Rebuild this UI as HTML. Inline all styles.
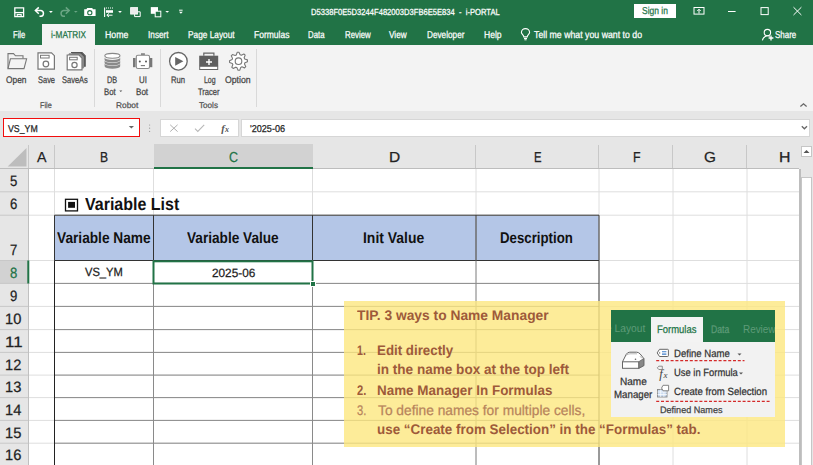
<!DOCTYPE html>
<html><head><meta charset="utf-8">
<style>
*{box-sizing:border-box;margin:0;padding:0}
html,body{width:813px;height:465px;overflow:hidden;background:#fff;font-family:"Liberation Sans",sans-serif}
.a{position:absolute}
.t{white-space:pre;transform-origin:0 0}
</style></head><body>
<div class="a" style="left:0;top:0;width:813px;height:45px;background:#217346"></div>
<div class="a" style="left:634px;top:4px;width:42px;height:14px;background:#fff"></div>
<div class="a" style="left:42px;top:24px;width:53px;height:22px;background:#f3f3f3"></div>
<div class="a" style="left:0;top:45px;width:813px;height:66.5px;background:#f3f3f3;border-bottom:1px solid #dadada"></div>
<div class="a" style="left:94px;top:49px;width:1px;height:58px;background:#d9d9d9"></div>
<div class="a" style="left:160px;top:49px;width:1px;height:58px;background:#d9d9d9"></div>
<div class="a" style="left:256px;top:49px;width:1px;height:58px;background:#d9d9d9"></div>
<div class="a" style="left:0;top:111px;width:813px;height:58px;background:#e6e6e6"></div>
<div class="a" style="left:3px;top:118px;width:137px;height:19px;background:#fff;border:1px solid #f20d0d"></div>
<div class="a" style="left:160px;top:119px;width:79px;height:18px;background:#fff;border:1px solid #d6d6d6"></div>
<div class="a" style="left:241px;top:119px;width:569px;height:18px;background:#fff;border:1px solid #d6d6d6"></div>
<svg class="a" style="left:0;top:0" width="813" height="145"><polygon points="128.8,125.9 134,125.9 131.4,128.6" fill="#666"/><circle cx="149.6" cy="125" r="0.6" fill="#999"/><circle cx="149.6" cy="128.2" r="0.6" fill="#999"/><circle cx="149.6" cy="131.4" r="0.6" fill="#999"/><path d="M170.2,124.8 L177.6,131.6 M177.6,124.8 L170.2,131.6" stroke="#b0b0b0" stroke-width="1"/><path d="M195,128.6 L197.8,131.4 L204.2,124.8" fill="none" stroke="#b8b8b8" stroke-width="1.1"/><text x="221.3" y="131.5" font-family="Liberation Serif" font-style="italic" font-weight="bold" font-size="10.5" fill="#555">f</text><text x="225" y="131.8" font-family="Liberation Serif" font-style="italic" font-weight="bold" font-size="8" fill="#555">x</text><path d="M800.4,106.5 L803.5,103.8 L806.6,106.5" fill="none" stroke="#666" stroke-width="1.3"/><path d="M801.8,126.3 L804.4,128.8 L807,126.3" fill="none" stroke="#666" stroke-width="1.3"/></svg>
<div class="a" style="left:153.5px;top:144px;width:159px;height:25px;background:#d2d2d2"></div>
<div class="a" style="left:0;top:168px;width:799px;height:1px;background:#bdbdbd"></div>
<div class="a" style="left:153.5px;top:167px;width:159px;height:2px;background:#217346"></div>
<div class="a" style="left:28px;top:145px;width:1px;height:23px;background:#c8c8c8"></div>
<div class="a" style="left:54px;top:145px;width:1px;height:23px;background:#c8c8c8"></div>
<div class="a" style="left:475px;top:145px;width:1px;height:23px;background:#c8c8c8"></div>
<div class="a" style="left:598px;top:145px;width:1px;height:23px;background:#c8c8c8"></div>
<div class="a" style="left:672px;top:145px;width:1px;height:23px;background:#c8c8c8"></div>
<div class="a" style="left:746px;top:145px;width:1px;height:23px;background:#c8c8c8"></div>
<svg class="a" style="left:0;top:0" width="60" height="170"><polygon points="7.7,166.5 26.5,148 26.5,166.5" fill="#bdbdbd"/></svg>
<svg class="a" style="left:0;top:0" width="813" height="465"><rect x="0" y="169" width="28.5" height="300" fill="#e6e6e6"/><rect x="0" y="260.5" width="28.5" height="23" fill="#d2d2d2"/><rect x="54.5" y="215.2" width="544.5" height="45.3" fill="#b4c6e7"/><line x1="29" y1="191.8" x2="799" y2="191.8" stroke="#dedede"/><line x1="29" y1="215.2" x2="799" y2="215.2" stroke="#dedede"/><line x1="29" y1="260.5" x2="799" y2="260.5" stroke="#dedede"/><line x1="29" y1="283.4" x2="799" y2="283.4" stroke="#dedede"/><line x1="29" y1="306.4" x2="799" y2="306.4" stroke="#dedede"/><line x1="29" y1="329.6" x2="799" y2="329.6" stroke="#dedede"/><line x1="29" y1="352.4" x2="799" y2="352.4" stroke="#dedede"/><line x1="29" y1="375.1" x2="799" y2="375.1" stroke="#dedede"/><line x1="29" y1="397.6" x2="799" y2="397.6" stroke="#dedede"/><line x1="29" y1="420.4" x2="799" y2="420.4" stroke="#dedede"/><line x1="29" y1="443.2" x2="799" y2="443.2" stroke="#dedede"/><line x1="29" y1="466.2" x2="799" y2="466.2" stroke="#dedede"/><line x1="54.5" y1="169" x2="54.5" y2="466" stroke="#dedede"/><line x1="153.5" y1="169" x2="153.5" y2="466" stroke="#dedede"/><line x1="312.5" y1="169" x2="312.5" y2="466" stroke="#dedede"/><line x1="476" y1="169" x2="476" y2="466" stroke="#dedede"/><line x1="599" y1="169" x2="599" y2="466" stroke="#dedede"/><line x1="673" y1="169" x2="673" y2="466" stroke="#dedede"/><line x1="747" y1="169" x2="747" y2="466" stroke="#dedede"/><line x1="0" y1="191.8" x2="28.5" y2="191.8" stroke="#c8c8c8"/><line x1="0" y1="215.2" x2="28.5" y2="215.2" stroke="#c8c8c8"/><line x1="0" y1="260.5" x2="28.5" y2="260.5" stroke="#c8c8c8"/><line x1="0" y1="283.4" x2="28.5" y2="283.4" stroke="#c8c8c8"/><line x1="0" y1="306.4" x2="28.5" y2="306.4" stroke="#c8c8c8"/><line x1="0" y1="329.6" x2="28.5" y2="329.6" stroke="#c8c8c8"/><line x1="0" y1="352.4" x2="28.5" y2="352.4" stroke="#c8c8c8"/><line x1="0" y1="375.1" x2="28.5" y2="375.1" stroke="#c8c8c8"/><line x1="0" y1="397.6" x2="28.5" y2="397.6" stroke="#c8c8c8"/><line x1="0" y1="420.4" x2="28.5" y2="420.4" stroke="#c8c8c8"/><line x1="0" y1="443.2" x2="28.5" y2="443.2" stroke="#c8c8c8"/><line x1="0" y1="466.2" x2="28.5" y2="466.2" stroke="#c8c8c8"/><line x1="28.5" y1="169" x2="28.5" y2="466" stroke="#c0c0c0"/><line x1="28.3" y1="260.5" x2="28.3" y2="283.5" stroke="#217346" stroke-width="2"/><line x1="54.5" y1="215.2" x2="599" y2="215.2" stroke="#333"/><line x1="54.5" y1="260.5" x2="599" y2="260.5" stroke="#333"/><line x1="54.5" y1="215.2" x2="54.5" y2="260.5" stroke="#333"/><line x1="153.5" y1="215.2" x2="153.5" y2="260.5" stroke="#333"/><line x1="312.5" y1="215.2" x2="312.5" y2="260.5" stroke="#333"/><line x1="476" y1="215.2" x2="476" y2="260.5" stroke="#333"/><line x1="599" y1="215.2" x2="599" y2="260.5" stroke="#333"/><line x1="54.5" y1="283.4" x2="599" y2="283.4" stroke="#8a8a8a"/><line x1="54.5" y1="306.4" x2="599" y2="306.4" stroke="#8a8a8a"/><line x1="54.5" y1="329.6" x2="599" y2="329.6" stroke="#8a8a8a"/><line x1="54.5" y1="352.4" x2="599" y2="352.4" stroke="#8a8a8a"/><line x1="54.5" y1="375.1" x2="599" y2="375.1" stroke="#8a8a8a"/><line x1="54.5" y1="397.6" x2="599" y2="397.6" stroke="#8a8a8a"/><line x1="54.5" y1="420.4" x2="599" y2="420.4" stroke="#8a8a8a"/><line x1="54.5" y1="443.2" x2="599" y2="443.2" stroke="#8a8a8a"/><line x1="54.5" y1="466.2" x2="599" y2="466.2" stroke="#8a8a8a"/><line x1="54.5" y1="260.5" x2="54.5" y2="466" stroke="#222"/><line x1="153.5" y1="260.5" x2="153.5" y2="466" stroke="#8a8a8a"/><line x1="312.5" y1="260.5" x2="312.5" y2="466" stroke="#8a8a8a"/><line x1="476" y1="260.5" x2="476" y2="466" stroke="#8a8a8a"/><line x1="599" y1="260.5" x2="599" y2="466" stroke="#444"/><rect x="153.5" y="261.3" width="159" height="22.2" fill="none" stroke="#217346" stroke-width="2"/><rect x="310.5" y="281.5" width="5" height="5" fill="#217346" stroke="#fff" stroke-width="1"/><rect x="799" y="144" width="14" height="321" fill="#e6e6e6"/><line x1="800" y1="169" x2="800" y2="466" stroke="#bdbdbd" stroke-width="2"/><rect x="801.5" y="146.5" width="10" height="10" fill="#fff" stroke="#c6c6c6"/><polygon points="803.5,153 806.5,150 809.5,153" fill="#555"/><rect x="801.5" y="177.5" width="10" height="290" fill="#fff" stroke="#c6c6c6"/></svg>
<svg class="a" style="left:0;top:0" width="100" height="220"><rect x="65.5" y="199.3" width="12" height="11.6" fill="none" stroke="#111" stroke-width="1.3"/><rect x="68.1" y="201.9" width="6.9" height="5.9" fill="#111"/></svg>
<div class="a" style="left:344px;top:301px;width:441px;height:146px;background:rgba(253,231,128,0.8)"></div>
<div class="a" style="left:611px;top:310px;width:164px;height:32px;background:#217346"></div>
<div class="a" style="left:651px;top:317px;width:52px;height:25px;background:#f3f3f3"></div>
<div class="a" style="left:611px;top:342px;width:164px;height:75px;background:#f2f2f2"></div>
<div class="a" style="left:611px;top:318px;width:40px;height:20px;overflow:hidden"><div class="a t" style="left:-5.5px;top:5.5px;font-size:11px;line-height:11px;color:#5e9b78;transform:scaleX(0.93);text-rendering:geometricPrecision">e Layout</div></div>
<div class="a" style="left:703px;top:318px;width:72px;height:20px;overflow:hidden"><div class="a t" style="left:40.4px;top:5.7px;font-size:11px;line-height:11px;color:#5e9b78;transform:scaleX(0.9)">Review</div></div>
<svg class="a" style="left:0;top:0" width="813" height="465"><line x1="656.2" y1="360.6" x2="744.5" y2="360.6" stroke="#d42a2a" stroke-width="1.4" stroke-dasharray="3,1.8"/><line x1="656.2" y1="401.4" x2="769.7" y2="401.4" stroke="#d42a2a" stroke-width="1.4" stroke-dasharray="3,1.8"/><polygon points="737.5,353.5 741.5,353.5 739.5,355.5" fill="#555"/><polygon points="739,372.5 743,372.5 741,374.5" fill="#555"/><path d="M659.5,349.3 H667.6 A0.8,0.8 0 0 1 668.4,350.1 V355.7 A0.8,0.8 0 0 1 667.6,356.5 H659.5 L657.2,352.9 Z" fill="#fff" stroke="#666" stroke-width="1"/><path d="M662,351.7 H666.4 M662,354.1 H666.4" stroke="#3d7cc9" stroke-width="1.1"/><circle cx="659.6" cy="352.9" r="0.7" fill="#666"/><path d="M658.8,366.2 H662.3 V369.5 H658.8 L657.3,367.85 Z" fill="none" stroke="#777" stroke-width="0.8"/><text x="659.2" y="377.6" font-family="Liberation Serif" font-style="italic" font-size="12.5" fill="#444">f</text><text x="663.6" y="378.2" font-family="Liberation Serif" font-style="italic" font-size="9" fill="#444">x</text><rect x="657.5" y="389.5" width="9.5" height="7.5" fill="#c9daf0" stroke="#888" stroke-width="0.9"/><path d="M657.5,392 H667 M657.5,394.5 H667 M660.7,389.5 V397 M663.9,389.5 V397" stroke="#fff" stroke-width="0.7"/><path d="M663,385.3 H668.6 V390.8 H663 L661.6,388 Z" fill="#fff" stroke="#777" stroke-width="0.9"/><path d="M622.5,361.8 L626.2,354.4 Q627.4,352.2 629.8,352.2 H636.6 Q638.6,352.2 640.2,354 L643.8,358.5 V365.6 L638.6,368.3" fill="#fff" stroke="#666" stroke-width="1"/><path d="M638.7,361.8 L643.8,358.5 V365.6 L638.7,368.3 Z" fill="#888" stroke="#666" stroke-width="0.8"/><path d="M626.5,355.2 Q628,353.8 630,353.8 H637 M640,356.2 L642,358.4" fill="none" stroke="#999" stroke-width="0.7"/><circle cx="635.5" cy="359.2" r="0.8" fill="#666"/><rect x="622.5" y="361.8" width="16.2" height="6.5" fill="#fff" stroke="#666" stroke-width="1"/></svg>
<svg class="a" style="left:0;top:0" width="813" height="120"><path d="M14.8,7.8 H23.6 V16.6 H14.8 Z" fill="none" stroke="#fff" stroke-width="1.3"/><path d="M14.8,12.6 H23.6" stroke="#fff" stroke-width="1.3"/><path d="M17.2,16.6 V14.6 H21.2 V16.6" fill="none" stroke="#fff" stroke-width="1.1"/><path d="M35.8,10.6 H41 A3,2.9 0 0 1 41,16.3 H39.5" fill="none" stroke="#fff" stroke-width="1.5"/><path d="M38.8,7.4 L35.4,10.6 L38.8,13.8" fill="none" stroke="#fff" stroke-width="1.5"/><polygon points="49,11 52.8,11 50.9,12.9" fill="#fff"/><path d="M69,10.6 H63.5 A3,2.9 0 0 0 63.5,16.3 H65" fill="none" stroke="#6aa584" stroke-width="1.5"/><path d="M65.8,7.4 L69.2,10.6 L65.8,13.8" fill="none" stroke="#6aa584" stroke-width="1.5"/><polygon points="74,11 77.6,11 75.8,12.8" fill="#6aa584"/><path d="M84.2,9.2 H86.4 L87.2,8 H92.2 L93,9.2 H95.6 V16 H84.2 Z" fill="#fff"/><circle cx="89.8" cy="12.7" r="2.1" fill="none" stroke="#217346" stroke-width="1.1"/><path d="M104.6,7.4 V17" stroke="#fff" stroke-width="1.1"/><path d="M106,8 H113" stroke="#fff" stroke-width="1" stroke-dasharray="1,1"/><rect x="106" y="10.2" width="7" height="2.6" fill="#fff"/><path d="M112.5,15.2 H107 M109,13.4 L106.8,15.2 L109,17" fill="none" stroke="#fff" stroke-width="1"/><polygon points="118.1,11 121.9,11 120,12.9" fill="#fff"/><rect x="130.6" y="7.6" width="7" height="6.5" fill="#ececec" stroke="#fff" stroke-width="0.8"/><path d="M137.6,11.8 H140.2 V16.6 H134.6 V14.2" fill="none" stroke="#fff" stroke-width="1"/><rect x="150.8" y="7.1" width="7.2" height="6.7" fill="#fff"/><rect x="155.2" y="11.2" width="5.6" height="5.6" fill="#217346" stroke="#fff" stroke-width="1"/><polygon points="165.3,10.9 169.1,10.9 167.2,12.8" fill="#fff"/><path d="M179.1,10.2 H182.6" stroke="#fff" stroke-width="1"/><polygon points="179,11.7 182.8,11.7 180.9,13.8" fill="#fff"/><rect x="694" y="7.5" width="10" height="6.6" fill="none" stroke="#fff" stroke-width="1"/><path d="M699,13.5 V9.5 M697.3,11 L699,9.2 L700.7,11" fill="none" stroke="#fff" stroke-width="1"/><path d="M728,11.5 H735.6" stroke="#fff" stroke-width="1"/><rect x="761" y="7.6" width="7.2" height="7" fill="none" stroke="#fff" stroke-width="1"/><path d="M793.5,7.2 L801.4,15 M801.4,7.2 L793.5,15" stroke="#fff" stroke-width="1"/><g transform="translate(0,0.9)"><path d="M523.8,36 C523.8,34 521.4,33 521.4,31.6 A4.1,3.9 0 0 1 529.6,31.6 C529.6,33 527.2,34 527.2,36 Z" fill="none" stroke="#fff" stroke-width="1.1"/><path d="M524,37.6 H527 M524.4,38.9 H526.6" stroke="#fff" stroke-width="1"/></g><circle cx="767.4" cy="32.6" r="3.2" fill="none" stroke="#fff" stroke-width="1.1"/><path d="M762.4,40.4 A5.6,5.6 0 0 1 770,36.2" fill="none" stroke="#fff" stroke-width="1.1"/><path d="M771,35.6 V40.4 M768.6,38 H773.4" stroke="#fff" stroke-width="1.3"/><path d="M8,68.6 V53.6 H13.5 L15.5,55.8 H23 V58.6" fill="none" stroke="#777" stroke-width="1.1"/><path d="M8,68.6 L10.4,58.8 H26.6 L24,68.6 Z" fill="none" stroke="#777" stroke-width="1.1"/><path d="M38,52.8 H51.5 L54.4,55.7 V69.2 H38 Z" fill="#fff" stroke="#777" stroke-width="1.2"/><rect x="40.5" y="55.3" width="8.6" height="2.7" fill="none" stroke="#777" stroke-width="1"/><circle cx="45.9" cy="64" r="2.8" fill="none" stroke="#777" stroke-width="1.2"/><path d="M71,52.5 H82 L85.2,55.7 V66.3 H83" fill="#555" stroke="#555" stroke-width="1.1"/><path d="M69,53.8 H80.5 L83.6,57 V68 H69 Z" fill="#999" stroke="#888" stroke-width="1"/><path d="M67.2,55 H79 L82,58 V69.8 H67.2 Z" fill="#fff" stroke="#777" stroke-width="1.2"/><rect x="69.6" y="57.3" width="7.6" height="2.5" fill="none" stroke="#777" stroke-width="1"/><circle cx="74.5" cy="65" r="2.6" fill="none" stroke="#777" stroke-width="1.2"/><path d="M104.6,63.6 V66.2 A7.8,2.5 0 0 0 120.2,66.2 V63.6 A7.8,2.5 0 0 1 104.6,63.6 Z" fill="#8a8a8a"/><path d="M104.6,60.6 V62.9 A7.8,2.5 0 0 0 120.2,62.9 V60.6 A7.8,2.5 0 0 1 104.6,60.6 Z" fill="#8a8a8a"/><path d="M104.6,57.6 V59.9 A7.8,2.5 0 0 0 120.2,59.9 V57.6 A7.8,2.5 0 0 1 104.6,57.6 Z" fill="#8a8a8a"/><ellipse cx="112.4" cy="55.8" rx="7.6" ry="2.4" fill="#fff" stroke="#888" stroke-width="1.1"/><rect x="141" y="53.2" width="3.9" height="2" fill="#888"/><rect x="133" y="58" width="2.6" height="9.2" fill="#777"/><rect x="149.8" y="58" width="2.5" height="9.2" fill="#777"/><rect x="136.3" y="55.2" width="13.2" height="13.3" rx="1.6" fill="#fff" stroke="#888" stroke-width="1.1"/><circle cx="139.8" cy="61.5" r="1" fill="#555"/><circle cx="146" cy="61.5" r="1" fill="#555"/><path d="M140.8,65.6 H145" stroke="#777" stroke-width="1.1"/><circle cx="178.4" cy="61.3" r="8.8" fill="#fff" stroke="#666" stroke-width="1.3"/><polygon points="175.2,56.9 175.2,65.7 183.4,61.3" fill="#666"/><path d="M203.8,55.8 V53.2 H213.9 V55.8" fill="none" stroke="#666" stroke-width="1.2"/><rect x="199.2" y="55.7" width="19" height="10.6" fill="#5f5f5f"/><rect x="199.7" y="66.3" width="18" height="3.2" fill="#fff" stroke="#666" stroke-width="1"/><path d="M209,59 V65 M206,62 H212" stroke="#fff" stroke-width="1.4"/><polygon points="119.3,90.6 122.3,90.6 120.8,92.1" fill="#555"/></svg>
<svg class="a" style="left:0;top:0" width="813" height="120"><polygon points="237.18,52.30 238.94,52.21 240.10,54.80 241.32,55.23 243.86,53.97 245.17,55.16 244.16,57.81 244.71,58.98 247.40,59.88 247.49,61.64 244.90,62.80 244.47,64.02 245.73,66.56 244.54,67.87 241.89,66.86 240.72,67.41 239.82,70.10 238.06,70.19 236.90,67.60 235.68,67.17 233.14,68.43 231.83,67.24 232.84,64.59 232.29,63.42 229.60,62.52 229.51,60.76 232.10,59.60 232.53,58.38 231.27,55.84 232.46,54.53 235.11,55.54 236.28,54.99" fill="#fff" stroke="#777" stroke-width="1.1" stroke-linejoin="round"/><circle cx="238.5" cy="61.2" r="3.3" fill="none" stroke="#777" stroke-width="1.1"/></svg>
<div class="a t" style="left:310.60px;top:8.35px;color:#fff;-webkit-text-stroke:0.25px #fff;text-rendering:geometricPrecision;font-size:8.8px;line-height:8.8px;transform:scaleX(0.8646);font-weight:normal;font-family:'Liberation Sans';">D5338F0E5D3244F482003D3FB6E5E834  -  i-PORTAL</div>
<div class="a t" style="left:641.60px;top:6.93px;color:#217346;-webkit-text-stroke:0.25px #217346;text-rendering:geometricPrecision;font-size:10px;line-height:10px;transform:scaleX(0.8464);font-weight:normal;font-family:'Liberation Sans';">Sign in</div>
<div class="a t" style="left:12.60px;top:30.94px;color:#fff;-webkit-text-stroke:0.25px #fff;text-rendering:geometricPrecision;font-size:10px;line-height:10px;transform:scaleX(0.7614);font-weight:normal;font-family:'Liberation Sans';">File</div>
<div class="a t" style="left:105.00px;top:30.94px;color:#fff;-webkit-text-stroke:0.25px #fff;text-rendering:geometricPrecision;font-size:10px;line-height:10px;transform:scaleX(0.8781);font-weight:normal;font-family:'Liberation Sans';">Home</div>
<div class="a t" style="left:148.00px;top:30.94px;color:#fff;-webkit-text-stroke:0.25px #fff;text-rendering:geometricPrecision;font-size:10px;line-height:10px;transform:scaleX(0.8244);font-weight:normal;font-family:'Liberation Sans';">Insert</div>
<div class="a t" style="left:188.00px;top:30.94px;color:#fff;-webkit-text-stroke:0.25px #fff;text-rendering:geometricPrecision;font-size:10px;line-height:10px;transform:scaleX(0.8302);font-weight:normal;font-family:'Liberation Sans';">Page Layout</div>
<div class="a t" style="left:253.80px;top:30.94px;color:#fff;-webkit-text-stroke:0.25px #fff;text-rendering:geometricPrecision;font-size:10px;line-height:10px;transform:scaleX(0.8495);font-weight:normal;font-family:'Liberation Sans';">Formulas</div>
<div class="a t" style="left:307.60px;top:30.94px;color:#fff;-webkit-text-stroke:0.25px #fff;text-rendering:geometricPrecision;font-size:10px;line-height:10px;transform:scaleX(0.7792);font-weight:normal;font-family:'Liberation Sans';">Data</div>
<div class="a t" style="left:344.60px;top:30.94px;color:#fff;-webkit-text-stroke:0.25px #fff;text-rendering:geometricPrecision;font-size:10px;line-height:10px;transform:scaleX(0.7865);font-weight:normal;font-family:'Liberation Sans';">Review</div>
<div class="a t" style="left:389.40px;top:30.94px;color:#fff;-webkit-text-stroke:0.25px #fff;text-rendering:geometricPrecision;font-size:10px;line-height:10px;transform:scaleX(0.8181);font-weight:normal;font-family:'Liberation Sans';">View</div>
<div class="a t" style="left:427.00px;top:30.94px;color:#fff;-webkit-text-stroke:0.25px #fff;text-rendering:geometricPrecision;font-size:10px;line-height:10px;transform:scaleX(0.8218);font-weight:normal;font-family:'Liberation Sans';">Developer</div>
<div class="a t" style="left:483.60px;top:30.94px;color:#fff;-webkit-text-stroke:0.25px #fff;text-rendering:geometricPrecision;font-size:10px;line-height:10px;transform:scaleX(0.8569);font-weight:normal;font-family:'Liberation Sans';">Help</div>
<div class="a t" style="left:533.60px;top:30.94px;color:#fff;-webkit-text-stroke:0.25px #fff;text-rendering:geometricPrecision;font-size:10px;line-height:10px;transform:scaleX(0.8754);font-weight:normal;font-family:'Liberation Sans';">Tell me what you want to do</div>
<div class="a t" style="left:775.00px;top:30.94px;color:#fff;-webkit-text-stroke:0.25px #fff;text-rendering:geometricPrecision;font-size:10px;line-height:10px;transform:scaleX(0.7965);font-weight:normal;font-family:'Liberation Sans';">Share</div>
<div class="a t" style="left:51.40px;top:30.94px;color:#217346;-webkit-text-stroke:0.25px #217346;text-rendering:geometricPrecision;font-size:10px;line-height:10px;transform:scaleX(0.8202);font-weight:normal;font-family:'Liberation Sans';">i-MATRIX</div>
<div class="a t" style="left:5.80px;top:76.36px;color:#444;-webkit-text-stroke:0.25px #444;text-rendering:geometricPrecision;font-size:9.5px;line-height:9.5px;transform:scaleX(0.8800);font-weight:normal;font-family:'Liberation Sans';">Open</div>
<div class="a t" style="left:37.80px;top:76.36px;color:#444;-webkit-text-stroke:0.25px #444;text-rendering:geometricPrecision;font-size:9.5px;line-height:9.5px;transform:scaleX(0.7862);font-weight:normal;font-family:'Liberation Sans';">Save</div>
<div class="a t" style="left:62.40px;top:76.36px;color:#444;-webkit-text-stroke:0.25px #444;text-rendering:geometricPrecision;font-size:9.5px;line-height:9.5px;transform:scaleX(0.7881);font-weight:normal;font-family:'Liberation Sans';">SaveAs</div>
<div class="a t" style="left:106.60px;top:76.36px;color:#444;-webkit-text-stroke:0.25px #444;text-rendering:geometricPrecision;font-size:9.5px;line-height:9.5px;transform:scaleX(0.7646);font-weight:normal;font-family:'Liberation Sans';">DB</div>
<div class="a t" style="left:104.00px;top:87.56px;color:#444;-webkit-text-stroke:0.25px #444;text-rendering:geometricPrecision;font-size:9.5px;line-height:9.5px;transform:scaleX(0.8208);font-weight:normal;font-family:'Liberation Sans';">Bot</div>
<div class="a t" style="left:138.60px;top:76.36px;color:#444;-webkit-text-stroke:0.25px #444;text-rendering:geometricPrecision;font-size:9.5px;line-height:9.5px;transform:scaleX(0.8364);font-weight:normal;font-family:'Liberation Sans';">UI</div>
<div class="a t" style="left:136.00px;top:87.56px;color:#444;-webkit-text-stroke:0.25px #444;text-rendering:geometricPrecision;font-size:9.5px;line-height:9.5px;transform:scaleX(0.8484);font-weight:normal;font-family:'Liberation Sans';">Bot</div>
<div class="a t" style="left:171.40px;top:76.36px;color:#444;-webkit-text-stroke:0.25px #444;text-rendering:geometricPrecision;font-size:9.5px;line-height:9.5px;transform:scaleX(0.8063);font-weight:normal;font-family:'Liberation Sans';">Run</div>
<div class="a t" style="left:203.60px;top:76.36px;color:#444;-webkit-text-stroke:0.25px #444;text-rendering:geometricPrecision;font-size:9.5px;line-height:9.5px;transform:scaleX(0.7328);font-weight:normal;font-family:'Liberation Sans';">Log</div>
<div class="a t" style="left:198.00px;top:87.56px;color:#444;-webkit-text-stroke:0.25px #444;text-rendering:geometricPrecision;font-size:9.5px;line-height:9.5px;transform:scaleX(0.7957);font-weight:normal;font-family:'Liberation Sans';">Tracer</div>
<div class="a t" style="left:225.00px;top:76.36px;color:#444;-webkit-text-stroke:0.25px #444;text-rendering:geometricPrecision;font-size:9.5px;line-height:9.5px;transform:scaleX(0.9169);font-weight:normal;font-family:'Liberation Sans';">Option</div>
<div class="a t" style="left:40.00px;top:100.97px;color:#555;-webkit-text-stroke:0.25px #555;text-rendering:geometricPrecision;font-size:8.3px;line-height:8.3px;transform:scaleX(0.8724);font-weight:normal;font-family:'Liberation Sans';">File</div>
<div class="a t" style="left:116.20px;top:100.97px;color:#555;-webkit-text-stroke:0.25px #555;text-rendering:geometricPrecision;font-size:8.3px;line-height:8.3px;transform:scaleX(1.0077);font-weight:normal;font-family:'Liberation Sans';">Robot</div>
<div class="a t" style="left:199.20px;top:100.97px;color:#555;-webkit-text-stroke:0.25px #555;text-rendering:geometricPrecision;font-size:8.3px;line-height:8.3px;transform:scaleX(0.9782);font-weight:normal;font-family:'Liberation Sans';">Tools</div>
<div class="a t" style="left:7.60px;top:124.53px;color:#222;-webkit-text-stroke:0.25px #222;text-rendering:geometricPrecision;font-size:10px;line-height:10px;transform:scaleX(0.8758);font-weight:normal;font-family:'Liberation Sans';">VS_YM</div>
<div class="a t" style="left:249.60px;top:124.73px;color:#222;-webkit-text-stroke:0.25px #222;text-rendering:geometricPrecision;font-size:10px;line-height:10px;transform:scaleX(0.9066);font-weight:normal;font-family:'Liberation Sans';">'2025-06</div>
<div class="a t" style="left:36.60px;top:150.93px;color:#222;-webkit-text-stroke:0.25px #222;text-rendering:geometricPrecision;font-size:14.5px;line-height:14.5px;transform:scaleX(0.9801);font-weight:normal;font-family:'Liberation Sans';">A</div>
<div class="a t" style="left:99.69px;top:150.93px;color:#222;-webkit-text-stroke:0.25px #222;text-rendering:geometricPrecision;font-size:14.5px;line-height:14.5px;transform:scaleX(0.8327);font-weight:normal;font-family:'Liberation Sans';">B</div>
<div class="a t" style="left:228.60px;top:150.93px;color:#217346;-webkit-text-stroke:0.25px #217346;text-rendering:geometricPrecision;font-size:14.5px;line-height:14.5px;transform:scaleX(0.8604);font-weight:normal;font-family:'Liberation Sans';">C</div>
<div class="a t" style="left:388.77px;top:150.93px;color:#222;-webkit-text-stroke:0.25px #222;text-rendering:geometricPrecision;font-size:14.5px;line-height:14.5px;transform:scaleX(1.0678);font-weight:normal;font-family:'Liberation Sans';">D</div>
<div class="a t" style="left:533.88px;top:150.93px;color:#222;-webkit-text-stroke:0.25px #222;text-rendering:geometricPrecision;font-size:14.5px;line-height:14.5px;transform:scaleX(0.7824);font-weight:normal;font-family:'Liberation Sans';">E</div>
<div class="a t" style="left:632.94px;top:150.93px;color:#222;-webkit-text-stroke:0.25px #222;text-rendering:geometricPrecision;font-size:14.5px;line-height:14.5px;transform:scaleX(0.8502);font-weight:normal;font-family:'Liberation Sans';">F</div>
<div class="a t" style="left:704.00px;top:150.93px;color:#222;-webkit-text-stroke:0.25px #222;text-rendering:geometricPrecision;font-size:14.5px;line-height:14.5px;transform:scaleX(1.0553);font-weight:normal;font-family:'Liberation Sans';">G</div>
<div class="a t" style="left:778.56px;top:150.93px;color:#222;-webkit-text-stroke:0.25px #222;text-rendering:geometricPrecision;font-size:14.5px;line-height:14.5px;transform:scaleX(1.0909);font-weight:normal;font-family:'Liberation Sans';">H</div>
<div class="a t" style="left:10.20px;top:174.30px;color:#222;-webkit-text-stroke:0.25px #222;text-rendering:geometricPrecision;font-size:15px;line-height:15px;transform:scaleX(0.8750);font-weight:normal;font-family:'Liberation Sans';">5</div>
<div class="a t" style="left:10.20px;top:197.10px;color:#222;-webkit-text-stroke:0.25px #222;text-rendering:geometricPrecision;font-size:15px;line-height:15px;transform:scaleX(0.8750);font-weight:normal;font-family:'Liberation Sans';">6</div>
<div class="a t" style="left:10.20px;top:242.70px;color:#222;-webkit-text-stroke:0.25px #222;text-rendering:geometricPrecision;font-size:15px;line-height:15px;transform:scaleX(0.8750);font-weight:normal;font-family:'Liberation Sans';">7</div>
<div class="a t" style="left:10.20px;top:265.60px;color:#217346;-webkit-text-stroke:0.25px #217346;text-rendering:geometricPrecision;font-size:15px;line-height:15px;transform:scaleX(0.8750);font-weight:normal;font-family:'Liberation Sans';">8</div>
<div class="a t" style="left:10.20px;top:288.60px;color:#222;-webkit-text-stroke:0.25px #222;text-rendering:geometricPrecision;font-size:15px;line-height:15px;transform:scaleX(0.8750);font-weight:normal;font-family:'Liberation Sans';">9</div>
<div class="a t" style="left:4.99px;top:311.80px;color:#222;-webkit-text-stroke:0.25px #222;text-rendering:geometricPrecision;font-size:15px;line-height:15px;transform:scaleX(0.9787);font-weight:normal;font-family:'Liberation Sans';">10</div>
<div class="a t" style="left:4.91px;top:335.20px;color:#222;-webkit-text-stroke:0.25px #222;text-rendering:geometricPrecision;font-size:15px;line-height:15px;transform:scaleX(1.1256);font-weight:normal;font-family:'Liberation Sans';">11</div>
<div class="a t" style="left:4.99px;top:357.50px;color:#222;-webkit-text-stroke:0.25px #222;text-rendering:geometricPrecision;font-size:15px;line-height:15px;transform:scaleX(0.9787);font-weight:normal;font-family:'Liberation Sans';">12</div>
<div class="a t" style="left:4.99px;top:379.60px;color:#222;-webkit-text-stroke:0.25px #222;text-rendering:geometricPrecision;font-size:15px;line-height:15px;transform:scaleX(0.9787);font-weight:normal;font-family:'Liberation Sans';">13</div>
<div class="a t" style="left:4.99px;top:403.10px;color:#222;-webkit-text-stroke:0.25px #222;text-rendering:geometricPrecision;font-size:15px;line-height:15px;transform:scaleX(0.9787);font-weight:normal;font-family:'Liberation Sans';">14</div>
<div class="a t" style="left:4.99px;top:425.60px;color:#222;-webkit-text-stroke:0.25px #222;text-rendering:geometricPrecision;font-size:15px;line-height:15px;transform:scaleX(0.9787);font-weight:normal;font-family:'Liberation Sans';">15</div>
<div class="a t" style="left:4.99px;top:448.30px;color:#222;-webkit-text-stroke:0.25px #222;text-rendering:geometricPrecision;font-size:15px;line-height:15px;transform:scaleX(0.9787);font-weight:normal;font-family:'Liberation Sans';">16</div>
<div class="a t" style="left:85.00px;top:196.10px;color:#111;text-rendering:geometricPrecision;font-size:17.6px;line-height:17.6px;transform:scaleX(0.9095);font-weight:bold;font-family:'Liberation Sans';">Variable List</div>
<div class="a t" style="left:57.40px;top:231.48px;color:#111;text-rendering:geometricPrecision;font-size:15.5px;line-height:15.5px;transform:scaleX(0.8838);font-weight:bold;font-family:'Liberation Sans';">Variable Name</div>
<div class="a t" style="left:85.20px;top:266.24px;color:#222;-webkit-text-stroke:0.25px #222;text-rendering:geometricPrecision;font-size:12px;line-height:12px;transform:scaleX(0.9292);font-weight:normal;font-family:'Liberation Sans';">VS_YM</div>
<div class="a t" style="left:211.60px;top:266.84px;color:#222;-webkit-text-stroke:0.25px #222;text-rendering:geometricPrecision;font-size:12px;line-height:12px;transform:scaleX(0.9828);font-weight:normal;font-family:'Liberation Sans';">2025-06</div>
<div class="a t" style="left:186.80px;top:230.88px;color:#111;text-rendering:geometricPrecision;font-size:15.5px;line-height:15.5px;transform:scaleX(0.8792);font-weight:bold;font-family:'Liberation Sans';">Variable Value</div>
<div class="a t" style="left:363.11px;top:230.88px;color:#111;text-rendering:geometricPrecision;font-size:15.5px;line-height:15.5px;transform:scaleX(0.8988);font-weight:bold;font-family:'Liberation Sans';">Init Value</div>
<div class="a t" style="left:500.15px;top:230.88px;color:#111;text-rendering:geometricPrecision;font-size:15.5px;line-height:15.5px;transform:scaleX(0.8545);font-weight:bold;font-family:'Liberation Sans';">Description</div>
<div class="a t" style="left:357.20px;top:308.15px;color:#9e5a3a;text-rendering:geometricPrecision;font-size:14px;line-height:14px;transform:scaleX(0.9866);font-weight:bold;font-family:'Liberation Sans';">TIP. 3 ways to Name Manager</div>
<div class="a t" style="left:357.40px;top:343.35px;color:#9e5a3a;text-rendering:geometricPrecision;font-size:14px;line-height:14px;transform:scaleX(0.7604);font-weight:bold;font-family:'Liberation Sans';">1.</div>
<div class="a t" style="left:377.20px;top:343.35px;color:#9e5a3a;text-rendering:geometricPrecision;font-size:14px;line-height:14px;transform:scaleX(0.9510);font-weight:bold;font-family:'Liberation Sans';">Edit directly</div>
<div class="a t" style="left:377.20px;top:362.15px;color:#9e5a3a;text-rendering:geometricPrecision;font-size:14px;line-height:14px;transform:scaleX(0.9684);font-weight:bold;font-family:'Liberation Sans';">in the name box at the top left</div>
<div class="a t" style="left:357.40px;top:382.75px;color:#9e5a3a;text-rendering:geometricPrecision;font-size:14px;line-height:14px;transform:scaleX(0.7977);font-weight:bold;font-family:'Liberation Sans';">2.</div>
<div class="a t" style="left:377.20px;top:382.75px;color:#9e5a3a;text-rendering:geometricPrecision;font-size:14px;line-height:14px;transform:scaleX(0.9594);font-weight:bold;font-family:'Liberation Sans';">Name Manager In Formulas</div>
<div class="a t" style="left:357.40px;top:402.55px;color:#b8845c;-webkit-text-stroke:0.25px #b8845c;text-rendering:geometricPrecision;font-size:14px;line-height:14px;transform:scaleX(0.7977);font-weight:normal;font-family:'Liberation Sans';">3.</div>
<div class="a t" style="left:378.40px;top:402.55px;color:#b8845c;-webkit-text-stroke:0.25px #b8845c;text-rendering:geometricPrecision;font-size:14px;line-height:14px;transform:scaleX(0.9829);font-weight:normal;font-family:'Liberation Sans';">To define names for multiple cells,</div>
<div class="a t" style="left:377.40px;top:421.55px;color:#9e5a3a;text-rendering:geometricPrecision;font-size:14px;line-height:14px;transform:scaleX(0.9580);font-weight:bold;font-family:'Liberation Sans';">use “Create from Selection” in the “Formulas” tab.</div>
<div class="a t" style="left:657.40px;top:324.69px;color:#217346;-webkit-text-stroke:0.25px #217346;text-rendering:geometricPrecision;font-size:11px;line-height:11px;transform:scaleX(0.8588);font-weight:normal;font-family:'Liberation Sans';">Formulas</div>
<div class="a t" style="left:711.00px;top:324.69px;color:#5e9b78;-webkit-text-stroke:0.25px #5e9b78;text-rendering:geometricPrecision;font-size:11px;line-height:11px;transform:scaleX(0.7878);font-weight:normal;font-family:'Liberation Sans';">Data</div>
<div class="a t" style="left:620.00px;top:377.31px;color:#333;-webkit-text-stroke:0.25px #333;text-rendering:geometricPrecision;font-size:10.5px;line-height:10.5px;transform:scaleX(0.9588);font-weight:normal;font-family:'Liberation Sans';">Name</div>
<div class="a t" style="left:614.00px;top:390.11px;color:#333;-webkit-text-stroke:0.25px #333;text-rendering:geometricPrecision;font-size:10.5px;line-height:10.5px;transform:scaleX(0.9251);font-weight:normal;font-family:'Liberation Sans';">Manager</div>
<div class="a t" style="left:673.80px;top:349.31px;color:#333;-webkit-text-stroke:0.25px #333;text-rendering:geometricPrecision;font-size:10.5px;line-height:10.5px;transform:scaleX(0.9115);font-weight:normal;font-family:'Liberation Sans';">Define Name</div>
<div class="a t" style="left:673.80px;top:368.31px;color:#333;-webkit-text-stroke:0.25px #333;text-rendering:geometricPrecision;font-size:10.5px;line-height:10.5px;transform:scaleX(0.8970);font-weight:normal;font-family:'Liberation Sans';">Use in Formula</div>
<div class="a t" style="left:673.80px;top:387.11px;color:#333;-webkit-text-stroke:0.25px #333;text-rendering:geometricPrecision;font-size:10.5px;line-height:10.5px;transform:scaleX(0.9164);font-weight:normal;font-family:'Liberation Sans';">Create from Selection</div>
<div class="a t" style="left:660.00px;top:406.33px;color:#444;-webkit-text-stroke:0.25px #444;text-rendering:geometricPrecision;font-size:9.3px;line-height:9.3px;transform:scaleX(0.9748);font-weight:normal;font-family:'Liberation Sans';">Defined Names</div>
</body></html>
